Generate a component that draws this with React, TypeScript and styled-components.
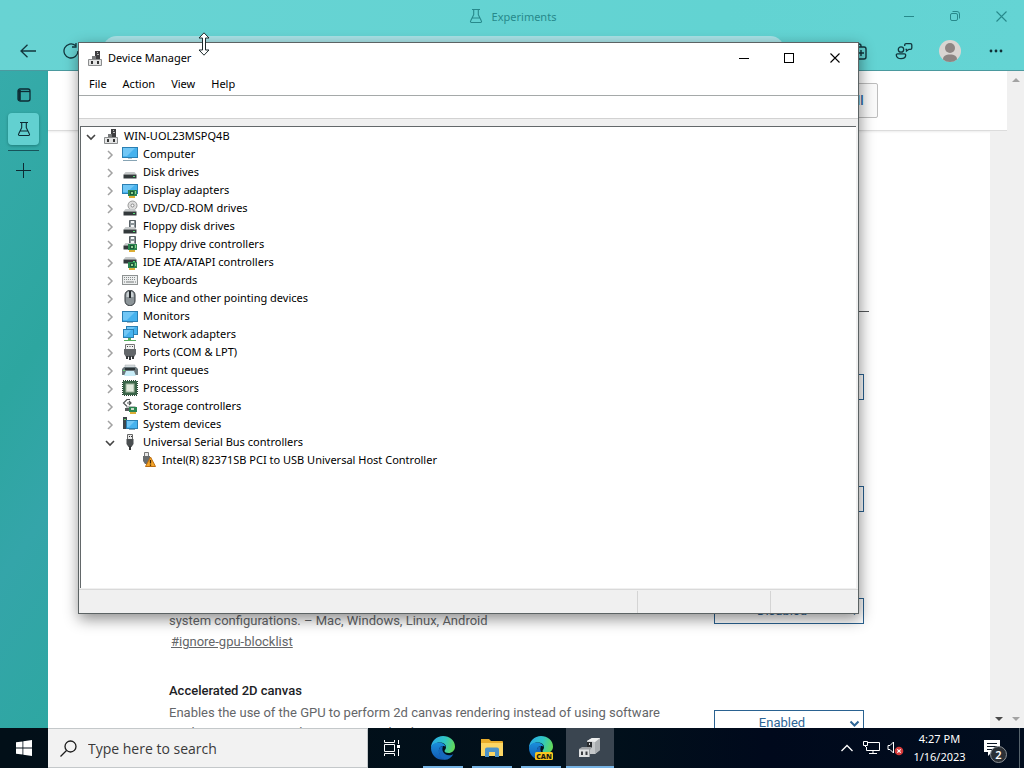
import React from "react";
import styled, { createGlobalStyle, css } from "styled-components";

const ui = `"Noto Sans", "Open Sans", sans-serif`;

const Global = createGlobalStyle`
  * { box-sizing: border-box; }
  body { margin: 0; font-family: ${ui}; font-size: 11px; overflow: hidden; }
  button, input, select { font: inherit; color: inherit; border: 0; background: none; padding: 0; margin: 0; border-radius: 0; }
  svg { display: block; flex: none; }
`;

const Desktop = styled.div`
  position: relative;
  height: 100vh;
  display: flex;
  flex-direction: column;
  overflow: hidden;
`;

/* ---------- Browser ---------- */

const Browser = styled.div`
  flex: 1;
  min-height: 0;
  display: flex;
  flex-direction: column;
`;

const BrowserTop = styled.header`
  background: linear-gradient(100deg, #68d3d3, #62d3d2 70%, #64d4d4);
  border-bottom: 1px solid #4c9a9f;
`;

const TitleRow = styled.div`
  position: relative;
  height: 32px;
  display: flex;
  justify-content: center;
  align-items: center;
  color: #27898b;
`;

const PageTitle = styled.div`
  display: flex;
  align-items: center;
  gap: 8px;
`;

const TitleButtons = styled.div`
  position: absolute;
  right: 0;
  top: 0;
  display: flex;
`;

const IconButton = styled.button<{ $w: number; $h: number }>`
  width: ${(p) => p.$w}px;
  height: ${(p) => p.$h}px;
  display: flex;
  flex: none;
  align-items: center;
  justify-content: center;
`;

const ToolRow = styled.div`
  height: 38px;
  display: flex;
  align-items: center;
  padding: 0 5px 0 6px;
  color: #12363d;
`;

const Address = styled.input`
  flex: 1;
  min-width: 0;
  height: 30px;
  margin: 0 50px 0 10px;
  border-radius: 15px;
  background: #a9e2e6;
`;

const BrowserBody = styled.div`
  flex: 1;
  min-height: 0;
  display: flex;
`;

const SideTabs = styled.nav`
  width: 48px;
  flex: none;
  padding: 8px 9px 8px 8px;
  display: flex;
  flex-direction: column;
  gap: 2px;
  color: #0d2b33;
  background: linear-gradient(125deg, #36abaa, #2da6a0 45%, #34a5a9 70%, #2ea7a2);
`;

const SideTab = styled.button<{ $active?: boolean }>`
  height: 32px;
  display: flex;
  align-items: center;
  justify-content: center;
  border-radius: 4px;
  ${(p) =>
    p.$active &&
    css`
      background: #62d0d0;
      box-shadow: 0 1px 3px rgba(0, 60, 60, 0.4);
    `}
`;

const SideRule = styled.div`
  height: 1px;
  margin: 3px 0 1px;
  background: #17545a;
`;

const PageArea = styled.div`
  flex: 1;
  min-width: 0;
  display: flex;
  flex-direction: column;
  background: #fff;
`;

const FlagsHeader = styled.div`
  height: 60px;
  flex: none;
  display: flex;
  justify-content: center;
  align-items: center;
  border-bottom: 1px solid #dcdcdc;
  box-shadow: 0 1px 2px rgba(0, 0, 0, 0.08);
  font-family: Roboto, sans-serif;
  font-size: 13px;
`;

const HeaderInner = styled.div`
  width: 700px;
  display: flex;
  justify-content: flex-end;
`;

const ResetButton = styled.button`
  height: 35px;
  padding: 0 13px;
  border: 1px solid #bdbdbd;
  border-radius: 2px;
  background: #fafafa;
  color: #2667a6;
  font-weight: 500;
`;

const Scroller = styled.div`
  flex: 1;
  min-height: 0;
  display: flex;
`;

const ScrollBar = styled.div`
  width: 17px;
  flex: none;
  background: #f0f0f0;
  display: flex;
  flex-direction: column;
  justify-content: space-between;
  align-items: center;
  padding: 5px 0;
`;

const Flags = styled.main`
  flex: 1;
  min-width: 0;
  overflow: hidden;
  font-family: Roboto, sans-serif;
  font-size: 13px;
  line-height: 20px;
  color: #646669;
`;

const FlagsColumn = styled.div`
  max-width: 700px;
  margin: 0 auto;
`;

const FlagsIntro = styled.div`
  height: 181px;
  border-bottom: 1px solid #55585b;
  margin-bottom: 33px;
`;

const FlagRow = styled.section`
  height: 112px;
  display: grid;
  grid-template-columns: 1fr 150px;
  padding-right: 5px;
  align-items: start;
`;

const FlagName = styled.h3`
  margin: 0 0 2px;
  font-size: 13px;
  font-weight: 500;
  color: #202124;
`;

const FlagText = styled.p`
  margin: 0;
`;

const FlagLink = styled.a`
  display: inline-block;
  padding-left: 2px;
  margin-top: 1px;
  color: inherit;
  text-decoration: underline;
`;

const SelectBox = styled.div`
  position: relative;
  margin-top: 29px;
  svg {
    position: absolute;
    right: 4px;
    top: 10px;
    pointer-events: none;
  }
`;

const FlagSelect = styled.select`
  display: block;
  width: 100%;
  height: 26px;
  appearance: none;
  border: 1px solid #2a6291;
  background: #fff;
  color: #2d6596;
  padding-right: 14px;
  text-align: center;
  text-align-last: center;
`;

/* ---------- Device Manager ---------- */

const Window = styled.section`
  position: absolute;
  left: 78px;
  top: 42px;
  width: 781px;
  height: 572px;
  display: flex;
  flex-direction: column;
  background: #fff;
  border: 1px solid #5c6364;
  box-shadow: 1px 5px 14px rgba(0, 0, 0, 0.45);
  color: #000;
`;

const WindowTitle = styled.div`
  height: 29px;
  display: flex;
  align-items: center;
  padding-left: 8px;
  gap: 5px;
`;

const Caption = styled.span`
  flex: 1;
`;

const WindowControls = styled.div`
  display: flex;
`;

const MenuBar = styled.div`
  height: 23px;
  display: flex;
  padding-left: 2px;
`;

const MenuItem = styled.button`
  padding: 0 8px;
`;

const ToolStrip = styled.div`
  height: 24px;
  border-top: 1px solid #a5a9a9;
  border-bottom: 1px solid #d2d2d2;
`;

const TreeFrame = styled.div`
  flex: 1;
  min-height: 0;
  display: flex;
  padding: 7px 2px 1px 1px;
  background: #f0f0f0;
`;

const Tree = styled.ul`
  flex: 1;
  margin: 0;
  padding: 0 0 0 1px;
  list-style: none;
  background: #fff;
  border-top: 1px solid #63686a;
  border-left: 1px solid #63686a;
`;

const TreeRow = styled.li<{ $level: number }>`
  height: 18px;
  display: flex;
  align-items: center;
  padding-left: ${(p) => p.$level * 19}px;
`;

const Expander = styled.button`
  width: 17px;
  height: 18px;
  margin-right: 4px;
  padding-top: 2px;
  display: flex;
  align-items: center;
  justify-content: center;
`;

const ExpanderGap = styled.span`
  width: 21px;
`;

const RowLabel = styled.span`
  margin-left: 5px;
  line-height: 18px;
  white-space: nowrap;
`;

const StatusBar = styled.div`
  height: 24px;
  display: flex;
  justify-content: flex-end;
  background: #f0f0f0;
  border-top: 1px solid #d9d9d9;
`;

const StatusCell = styled.div<{ $w: number }>`
  width: ${(p) => p.$w}px;
  margin-top: 1px;
  border-left: 1px solid #d4d4d4;
`;

const ResizePointer = styled.svg`
  position: absolute;
  left: 198px;
  top: 32px;
`;

/* ---------- Taskbar ---------- */

const Taskbar = styled.footer`
  height: 40px;
  flex: none;
  display: flex;
  background: linear-gradient(90deg, #020f18, #01101b 60%, #00091c 75%, #010d1e);
  color: #fff;
`;

const SearchBox = styled.label`
  width: 320px;
  display: flex;
  align-items: center;
  gap: 11px;
  padding-left: 12px;
  background: #f2f2f2;
  border: 1px solid #c4c8ca;
  border-left-width: 0;
  color: #1c1c1c;
`;

const SearchInput = styled.input`
  flex: 1;
  min-width: 0;
  font-family: "Open Sans", "Noto Sans", sans-serif;
  font-size: 14px;
  outline: 0;
  &::placeholder {
    color: #3a3a3a;
    opacity: 1;
  }
`;

const TaskButtons = styled.div`
  flex: 1;
  display: flex;
  gap: 1px;
`;

const TaskButton = styled.button<{ $state?: "open" | "active" }>`
  position: relative;
  width: 48px;
  height: 40px;
  display: flex;
  align-items: center;
  justify-content: center;
  ${(p) => p.$state === "active" && "background: #3a4550;"}
  &::after {
    content: "";
    position: absolute;
    bottom: 0;
    height: 2px;
    left: ${(p) => (p.$state === "active" ? 0 : 4)}px;
    right: ${(p) => (p.$state === "active" ? 0 : 4)}px;
    ${(p) => p.$state && "background: #76b3e4;"}
  }
`;

const TaskView = styled(TaskButton)`
  margin-right: 2px;
`;

const Tray = styled.div`
  display: flex;
  align-items: center;
`;

const Clock = styled.button`
  width: 65px;
  line-height: 18px;
  text-align: center;
  color: #fff;
`;

const ActionCenter = styled.button`
  position: relative;
  width: 47px;
  height: 40px;
  padding-right: 8px;
  display: flex;
  align-items: center;
  justify-content: center;
`;

const Badge = styled.span`
  position: absolute;
  left: 18px;
  top: 18px;
  width: 17px;
  height: 17px;
  border-radius: 50%;
  border: 1px solid #8c9196;
  background: #2b3036;
  font-weight: 600;
  line-height: 15px;
`;

const ShowDesktop = styled.button`
  width: 5px;
  height: 40px;
  border-left: 1px solid #56636c;
`;

/* ---------- Drawings ---------- */

const Flask = ({ size = 16 }: { size?: number }) => (
  <svg width={size} height={size} viewBox="0 0 16 16" fill="none" stroke="currentColor" strokeWidth="1.1">
    <path d="M4 1.5h8M5.7 1.5v5.2L2.6 13a1 1 0 0 0 .9 1.5h9a1 1 0 0 0 .9-1.5l-3.1-6.3V1.5M4.3 10h7.4" />
  </svg>
);

const Minus = ({ size }: { size: number }) => (
  <svg width={size} height={size} stroke="currentColor">
    <path d={`M0 ${Math.floor(size / 2) + 0.5}H${size}`} />
  </svg>
);

const Cross = ({ size }: { size: number }) => (
  <svg width={size} height={size} stroke="currentColor" strokeWidth="1.1">
    <path d={`M.5 .5L${size - 0.5} ${size - 0.5}M${size - 0.5} .5L.5 ${size - 0.5}`} />
  </svg>
);

const Chevron = ({ open }: { open?: boolean }) =>
  open ? (
    <svg width="10" height="10" fill="none" stroke="#444" strokeWidth="1.6">
      <path d="M1 3l4 4 4-4" />
    </svg>
  ) : (
    <svg width="10" height="10" fill="none" stroke="#a2a2a2" strokeWidth="1.5">
      <path d="M3 1l4 4-4 4" />
    </svg>
  );

const Triangle = ({ up, color }: { up?: boolean; color: string }) => (
  <svg width="8" height="8" fill={color}>
    <path d={up ? "M0 6l4-4 4 4z" : "M0 2h8L4 6z"} />
  </svg>
);

const Disk = ({ y = 9 }: { y?: number }) => (
  <g>
    <path d={`M3.5 ${y}h9l2 2.5h-13z`} fill="#c6c9ca" />
    <path d={`M1.5 ${y + 2.5}h13v4h-13z`} fill="#33393b" />
    <path d={`M11 ${y + 4}h2v1h-2z`} fill="#58dc78" />
  </g>
);

const Screen = ({ x, y, w, h }: { x: number; y: number; w: number; h: number }) => (
  <g>
    <rect x={x + 0.5} y={y + 0.5} width={w - 1} height={h - 1} fill="#46b2ee" stroke="#2a7fb3" />
    <path d={`M${x + 1} ${y + 1}h${w - 4}l-${w / 2} ${h - 3}h-${w / 2 - 4}z`} fill="#83d0fa" opacity=".7" />
  </g>
);

const Board = () => (
  <g>
    <path d="M6 8h9v6H6z" fill="#2b8550" />
    <path d="M8 9h4v4H8z" fill="#1b5738" />
    <path d="M9 10h2v2H9zM13 9h1v3h-1z" fill="#8ed28f" />
    <path d="M7 14h6v2H7z" fill="#dcae36" />
  </g>
);

const drawings: Record<string, React.ReactNode> = {
  root: (
    <>
      <path d="M8 1h5v8H8z" fill="#3e3e40" />
      <path d="M10 2h1v1h-1zM10 4h2v1h-2z" fill="#bababa" />
      <path d="M5 6h4v3H5z" fill="#77797a" />
      <path d="M1.500 9.500h13v6h-13z" fill="#e3e4e4" stroke="#8b8d8e" />
      <path d="M4 11h2v3H4zM10 11h2v3h-2z" fill="#333" />
    </>
  ),
  computer: (
    <>
      <Screen x={0} y={1} w={16} h={11} />
      <path d="M6 12h4v1H6z" fill="#b5c5cd" />
      <path d="M1 14h14v1H1z" fill="#87a4b4" />
    </>
  ),
  disk: <Disk y={8} />,
  display: (
    <>
      <Screen x={0} y={2} w={16} h={10} />
      <Board />
    </>
  ),
  dvd: (
    <>
      <circle cx="10.500" cy="5.500" r="4.500" fill="#dedede" stroke="#989898" />
      <circle cx="10.500" cy="5.500" r="1.500" fill="#fff" stroke="#888" />
      <Disk />
    </>
  ),
  floppy: (
    <>
      <path d="M7.500 2.500h6v7h-6z" fill="#8b9498" stroke="#596166" />
      <path d="M9 3h3v2H9zM9 7h3v2H9z" fill="#f2f5f6" />
      <Disk />
    </>
  ),
  floppyctl: (
    <>
      <path d="M7.500 .5h6v7h-6z" fill="#8b9498" stroke="#596166" />
      <path d="M9 1h3v2H9zM9 5h3v2H9z" fill="#f2f5f6" />
      <Disk y={7} />
      <Board />
    </>
  ),
  ide: (
    <>
      <Disk y={3} />
      <Board />
    </>
  ),
  keyboard: (
    <>
      <rect x=".5" y="3.500" width="15" height="9" fill="#eceeee" stroke="#8e9292" />
      <path d="M2 5.500h12M2 7.500h12" stroke="#888c8c" strokeDasharray="1 1" />
      <path d="M2 10h1M4 10h8M13 10h1" stroke="#777b7b" />
    </>
  ),
  mouse: (
    <>
      <rect x="3" y=".5" width="10" height="15" rx="4.500" fill="#8c9498" stroke="#30363a" />
      <path d="M4.500 7V4.500A3 3 0 0 1 7 1.500V7zM9 1.500a3 3 0 0 1 2.500 3V7H9z" fill="#c9d0d3" />
      <path d="M8 1v7" stroke="#22282b" strokeWidth="2" />
    </>
  ),
  monitor: (
    <>
      <Screen x={0} y={3} w={16} h={11} />
      <path d="M5 14h6v1H5z" fill="#9eb8c6" />
    </>
  ),
  network: (
    <>
      <Screen x={4} y={0} w={12} h={9} />
      <Screen x={1} y={3} w={11} h={9} />
      <path d="M6 12h3v2H6zM2 14h12v1H2z" fill="#54ad5d" />
    </>
  ),
  ports: (
    <>
      <path d="M3.500 .5h9v5h-9z" fill="#f1f1f1" stroke="#777" />
      <path d="M5 2h1v1H5zM7.500 2h1v1h-1zM10 2h1v1h-1z" fill="#444" />
      <path d="M2 5h12v5l-2 3H4l-2-3z" fill="#63676a" />
      <path d="M4 12h2v3H4zM7 12h2v4H7zM10 12h2v3h-2z" fill="#35383a" />
    </>
  ),
  printer: (
    <>
      <path d="M3 3h10v3H3z" fill="#d4dbde" stroke="#a4abae" strokeWidth=".5" />
      <path d="M0 7l2-2h12l2 2v6H0z" fill="#6a777c" />
      <path d="M3 6h10v2H3z" fill="#2c3437" />
      <path d="M4 9h8l2 5H2z" fill="#c9edf8" />
      <path d="M1 8h2v1H1z" fill="#61d76f" />
    </>
  ),
  cpu: (
    <>
      <rect x="1" y="1" width="14" height="14" fill="none" stroke="#2b4635" strokeWidth="2" strokeDasharray="1 1" />
      <rect x="1" y="1" width="14" height="14" fill="#3a6448" />
      <rect x="4" y="4" width="8" height="8" fill="#e1eadd" stroke="#9eb39c" />
    </>
  ),
  storage: (
    <>
      <path d="M8 1.500H5L1.500 5 5 8.500h3M9 5H5M7 3l2 2-2 2" fill="none" stroke="#4b4f50" strokeWidth="1.200" />
      <path d="M5 8h8l2 2H4z" fill="#b6babb" />
      <path d="M3 10h8v3H3z" fill="#585c5d" />
      <path d="M7 9h8v5H7z" fill="#2b8550" />
      <path d="M9 10h3v2H9z" fill="#c8ddc8" />
      <path d="M8 14h6v2H8z" fill="#dcae36" />
    </>
  ),
  system: (
    <>
      <path d="M1 1h4v12H1z" fill="#3d464b" />
      <path d="M2 3h2v1H2z" fill="#5ed36a" />
      <Screen x={4} y={4} w={12} h={9} />
      <path d="M7 13h6v1H7z" fill="#8ba8b7" />
    </>
  ),
  usb: (
    <>
      <path d="M5.500 .5h5v5h-5z" fill="#e9e9e9" stroke="#666" />
      <path d="M7 2h1v1H7zM9 2h1v1H9z" fill="#333" />
      <path d="M4.500 5h7v5l-2 3h-3l-2-3z" fill="#4b4f51" />
      <path d="M7 12h2v4H7z" fill="#37393a" />
    </>
  ),
  usbwarn: (
    <>
      <path d="M3.500 .5h4v4h-4z" fill="#e9e9e9" stroke="#777" />
      <path d="M2 4h7v5l-2 3H4L2 9z" fill="#696d6e" />
      <path d="M9.500 5l5 9.500h-10z" fill="#f6a62a" stroke="#bb6d10" />
      <path d="M9.500 8v3.500M9.500 12.500v1.200" stroke="#3b2205" strokeWidth="1.300" />
    </>
  ),
};

const DeviceIcon = ({ name }: { name: string }) => (
  <svg width="16" height="16" viewBox="0 0 16 16">
    {drawings[name]}
  </svg>
);

const EdgeLogo = ({ canary, id }: { canary?: boolean; id: string }) => (
  <svg width="26" height="26" viewBox="0 0 26 26">
    <defs>
      <linearGradient id={`${id}a`} x1="0" y1=".3" x2="1" y2=".5">
        <stop offset="0" stopColor="#2aa9e6" />
        <stop offset=".55" stopColor="#2fc6c4" />
        <stop offset="1" stopColor="#63d957" />
      </linearGradient>
      <linearGradient id={`${id}b`} x1="0" y1="0" x2="0" y2="1">
        <stop offset="0" stopColor="#1a8fdc" />
        <stop offset="1" stopColor="#1259b0" />
      </linearGradient>
    </defs>
    <path d="M1 13C1 6 6.500 1 13 1s12 4.500 12 10.500c0 4-3 6.500-6.500 6.500-2.500 0-4-1-4-2s1.500-1.500 1.500-4S13.500 7.500 9.500 7.500 2 10 1 13z" fill={`url(#${id}a)`} />
    <path d="M1 13c.5-3.500 4-5.500 8-5.500 4.500 0 6.500 2.500 6.500 4.500-1-1.500-5.500-1.500-6.500 2.500-.8 4 2.500 8 6.500 10C8 26 1 21 1 13z" fill={`url(#${id}b)`} />
    <path d="M9 14.500C9.500 12 11 11 13 11.300c-1.800 3.500.5 9 6 9 2 0 3.500-.6 4.300-1-1.800 3.500-5 5.500-8.300 5.500-4-1.500-7-6-6-10.300z" fill="#1668bd" />
    {canary && (
      <>
        <rect x="7" y="17" width="18" height="8" rx="1.500" fill="#f9c71f" />
        <text x="16" y="24" textAnchor="middle" fontFamily="Open Sans" fontSize="7" fontWeight="800" fill="#1c1a10">
          CAN
        </text>
      </>
    )}
  </svg>
);

/* ---------- Data ---------- */

type Device = { icon: string; label: string; level: number; open?: boolean; leaf?: boolean };

const devices: Device[] = [
  { icon: "root", label: "WIN-UOL23MSPQ4B", level: 0, open: true },
  { icon: "computer", label: "Computer", level: 1 },
  { icon: "disk", label: "Disk drives", level: 1 },
  { icon: "display", label: "Display adapters", level: 1 },
  { icon: "dvd", label: "DVD/CD-ROM drives", level: 1 },
  { icon: "floppy", label: "Floppy disk drives", level: 1 },
  { icon: "floppyctl", label: "Floppy drive controllers", level: 1 },
  { icon: "ide", label: "IDE ATA/ATAPI controllers", level: 1 },
  { icon: "keyboard", label: "Keyboards", level: 1 },
  { icon: "mouse", label: "Mice and other pointing devices", level: 1 },
  { icon: "monitor", label: "Monitors", level: 1 },
  { icon: "network", label: "Network adapters", level: 1 },
  { icon: "ports", label: "Ports (COM & LPT)", level: 1 },
  { icon: "printer", label: "Print queues", level: 1 },
  { icon: "cpu", label: "Processors", level: 1 },
  { icon: "storage", label: "Storage controllers", level: 1 },
  { icon: "system", label: "System devices", level: 1 },
  { icon: "usb", label: "Universal Serial Bus controllers", level: 1, open: true },
  { icon: "usbwarn", label: "Intel(R) 82371SB PCI to USB Universal Host Controller", level: 2, leaf: true },
];

type Flag = { id: string; name?: string; text?: string; link?: string; value: string };

const flags: Flag[] = [
  { id: "flag-1", value: "Default" },
  { id: "flag-2", value: "Default" },
  {
    id: "flag-3",
    name: "Override software rendering list",
    text: "Overrides the built-in software rendering list and enables GPU-acceleration on unsupported system configurations. – Mac, Windows, Linux, Android",
    link: "#ignore-gpu-blocklist",
    value: "Disabled",
  },
  {
    id: "flag-4",
    name: "Accelerated 2D canvas",
    text: "Enables the use of the GPU to perform 2d canvas rendering instead of using software rendering. – Mac, Windows, Linux, Android",
    value: "Enabled",
  },
];

export default function App() {
  return (
    <Desktop>
      <Global />
      <Browser>
        <BrowserTop>
          <TitleRow>
            <PageTitle>
              <Flask />
              <span>Experiments</span>
            </PageTitle>
            <TitleButtons>
              <IconButton $w={46} $h={32} aria-label="Minimize browser"><Minus size={10} /></IconButton>
              <IconButton $w={46} $h={32} aria-label="Restore browser">
                <svg width="10" height="10" fill="none" stroke="currentColor">
                  <rect x=".5" y="2.500" width="7" height="7" rx="1.500" />
                  <path d="M2.500.5H7A2.500 2.500 0 0 1 9.500 3v4.500" />
                </svg>
              </IconButton>
              <IconButton $w={46} $h={32} aria-label="Close browser"><Cross size={11} /></IconButton>
            </TitleButtons>
          </TitleRow>
          <ToolRow>
            <IconButton $w={44} $h={30} aria-label="Back">
              <svg width="16" height="14" fill="none" stroke="currentColor" strokeWidth="1.300">
                <path d="M16 7H1M7.500 .8L1 7l6.500 6.200" />
              </svg>
            </IconButton>
            <IconButton $w={42} $h={30} aria-label="Refresh">
              <svg width="16" height="16" fill="none" stroke="currentColor" strokeWidth="1.300">
                <path d="M15 8A7 7 0 1 1 12.500 2.600M13 0v4H9" />
              </svg>
            </IconButton>
            <Address aria-label="Address" />
            <IconButton $w={46} $h={30} aria-label="Collections">
              <svg width="18" height="18" fill="none" stroke="currentColor" strokeWidth="1.400">
                <rect x="5" y="5" width="12" height="12" rx="2" />
                <path d="M2 12V4a2 2 0 0 1 2-2h6a2 2 0 0 1 2 2v1M12 8v6M9 11h6" />
              </svg>
            </IconButton>
            <IconButton $w={46} $h={30} aria-label="Feedback">
              <svg width="18" height="18" fill="none" stroke="currentColor" strokeWidth="1.300">
                <circle cx="6" cy="7.500" r="2.700" />
                <path d="M2.500 11.800h7a1.200 1.200 0 0 1 1.200 1.200c0 2.300-2 3.700-4.700 3.700S1.300 15.300 1.300 13a1.200 1.200 0 0 1 1.200-1.200zM9.700 4V3A1.300 1.300 0 0 1 11 1.700h4.500a1.300 1.300 0 0 1 1.300 1.300v3a1.300 1.300 0 0 1-1.300 1.300H14l-2.500 1.700V7.300H10.500" />
              </svg>
            </IconButton>
            <IconButton $w={46} $h={30} aria-label="Profile">
              <svg width="22" height="22">
                <circle cx="11" cy="11" r="11" fill="#d9d5d2" />
                <circle cx="11" cy="8" r="5" fill="#8d8583" />
                <path d="M4 19.400c0-3.500 2.500-5 7-5s7 1.500 7 5A11 11 0 0 1 4 19.400z" fill="#8d8583" />
              </svg>
            </IconButton>
            <IconButton $w={46} $h={30} aria-label="Settings and more">
              <svg width="14" height="4" fill="#102f36">
                <circle cx="2" cy="2" r="1.400" />
                <circle cx="7" cy="2" r="1.400" />
                <circle cx="12" cy="2" r="1.400" />
              </svg>
            </IconButton>
          </ToolRow>
        </BrowserTop>
        <BrowserBody>
          <SideTabs>
            <SideTab aria-label="Tab actions">
              <svg width="14" height="14" fill="none" stroke="currentColor" strokeWidth="1.300">
                <rect x="1" y="1" width="12" height="12" rx="2" />
                <path d="M1 3.500h12" />
                <path d="M2.500 2v10.500" strokeWidth="2.600" />
              </svg>
            </SideTab>
            <SideTab $active aria-label="Experiments tab"><Flask /></SideTab>
            <SideRule />
            <SideTab aria-label="New tab">
              <svg width="15" height="15" stroke="currentColor">
                <path d="M0 7.500h15M7.500 0v15" />
              </svg>
            </SideTab>
          </SideTabs>
          <PageArea>
            <FlagsHeader>
              <HeaderInner>
                <ResetButton>Reset all</ResetButton>
              </HeaderInner>
            </FlagsHeader>
            <Scroller>
              <Flags>
                <FlagsColumn>
                  <FlagsIntro />
                  {flags.map((f) => (
                    <FlagRow key={f.id}>
                      <div>
                        {f.name && <FlagName>{f.name}</FlagName>}
                        {f.text && <FlagText>{f.text}</FlagText>}
                        {f.link && <FlagLink href={f.link}>{f.link}</FlagLink>}
                      </div>
                      <SelectBox>
                        <FlagSelect aria-label={f.name ?? "Experiment state"} defaultValue={f.value}>
                          <option>{f.value}</option>
                        </FlagSelect>
                        <svg width="11" height="8" fill="none" stroke="#2d6596" strokeWidth="2">
                          <path d="M1.500 1.500l4 4 4-4" />
                        </svg>
                      </SelectBox>
                    </FlagRow>
                  ))}
                </FlagsColumn>
              </Flags>
              <ScrollBar>
                <span />
                <Triangle color="#4a4a4a" />
              </ScrollBar>
            </Scroller>
          </PageArea>
          <ScrollBar>
            <Triangle up color="#a3a3a3" />
            <Triangle color="#a3a3a3" />
          </ScrollBar>
        </BrowserBody>
      </Browser>

      <Taskbar>
        <IconButton $w={48} $h={40} aria-label="Start">
          <svg width="16" height="16" fill="#fff">
            <path d="M0 2.300l6.500-.9v6.200H0zM7.300 1.300L16 0v7.600H7.300zM0 8.400h6.500v6.200L0 13.700zM7.300 8.400H16V16l-8.700-1.300z" />
          </svg>
        </IconButton>
        <SearchBox>
          <svg width="17" height="17" fill="none" stroke="currentColor" strokeWidth="1.300">
            <circle cx="10.500" cy="6.500" r="5.500" />
            <path d="M6.500 10.500L.5 16.500" />
          </svg>
          <SearchInput placeholder="Type here to search" />
        </SearchBox>
        <TaskButtons>
          <TaskView aria-label="Task view">
            <svg width="17" height="16" fill="none" stroke="#fff">
              <path d="M.5 0v2.500h10V0M.5 16v-2.500h10V16M.5 4.500h10v7H.5zM14.500 0v4M14.500 9v7" />
              <path d="M13 5h3v3h-3z" fill="#fff" stroke="none" />
            </svg>
          </TaskView>
          <TaskButton $state="open" aria-label="Microsoft Edge"><EdgeLogo id="edge" /></TaskButton>
          <TaskButton $state="open" aria-label="File Explorer">
            <svg width="22" height="20">
              <path d="M0 1h8l2 2h11a1 1 0 0 1 1 1v14H0z" fill="#e9ad2b" />
              <path d="M0 5h22v13H0z" fill="#fcd664" />
              <path d="M4 19v-7.500a2 2 0 0 1 2-2h10a2 2 0 0 1 2 2V19h-4v-5H8v5z" fill="#4d93c8" />
            </svg>
          </TaskButton>
          <TaskButton $state="open" aria-label="Microsoft Edge Canary"><EdgeLogo id="canary" canary /></TaskButton>
          <TaskButton $state="active" aria-label="Device Manager">
            <svg width="24" height="22">
              <path d="M9 4l5-3h8v12l-5 4h-8z" fill="#c4c7c9" />
              <path d="M17 5l5-4v12l-5 4z" fill="#a9adb0" />
              <path d="M9 4l5-3h8l-5 4z" fill="#eceeee" />
              <path d="M9 5h5v6H9z" fill="#2a2d30" />
              <path d="M11 6h1v2h-1z" fill="#d3d5d6" />
              <path d="M1 12l3-2h10l-2 3v7H1z" fill="#9da1a4" />
              <path d="M1 12.500h10V20H1z" fill="#dfe1e2" />
              <path d="M3 14.500h2V18H3zM7.500 14.500h2V18h-2z" fill="#3a3d40" />
            </svg>
          </TaskButton>
        </TaskButtons>
        <Tray>
          <IconButton $w={24} $h={40} aria-label="Show hidden icons">
            <svg width="12" height="8" fill="none" stroke="#fff" strokeWidth="1.300">
              <path d="M.5 7L6 1.500 11.500 7" />
            </svg>
          </IconButton>
          <IconButton $w={24} $h={40} aria-label="Network">
            <svg width="17" height="14" fill="none" stroke="#fff">
              <path d="M5 1.500h11.500v8H3.500V6M10 9.500v3M6 12.500h8" />
              <path d="M.5 .5h4v4h-4zM2.500 4.500V6" />
            </svg>
          </IconButton>
          <IconButton $w={24} $h={40} aria-label="Volume muted">
            <svg width="17" height="15" fill="none" stroke="#fff">
              <path d="M1 4.500h2L6.500 1v11L3 8.500H1z" />
              <circle cx="12" cy="10" r="4.300" fill="#d63a3a" stroke="none" />
              <path d="M10.300 8.300l3.400 3.400M13.700 8.300l-3.400 3.400" strokeWidth="1.200" />
            </svg>
          </IconButton>
          <Clock>4:27 PM<br />1/16/2023</Clock>
          <ActionCenter aria-label="Notifications">
            <svg width="18" height="18">
              <path d="M1 1h16v12H9l-4 4v-4H1z" fill="#fff" />
              <path d="M4 4.500h10M4 7.500h10M4 10.500h7" stroke="#0a1523" />
            </svg>
            <Badge>2</Badge>
          </ActionCenter>
          <ShowDesktop aria-label="Show desktop" />
        </Tray>
      </Taskbar>

      <Window aria-label="Device Manager">
        <WindowTitle>
          <DeviceIcon name="root" />
          <Caption>Device Manager</Caption>
          <WindowControls>
            <IconButton $w={45} $h={28} aria-label="Minimize"><Minus size={10} /></IconButton>
            <IconButton $w={46} $h={28} aria-label="Maximize">
              <svg width="10" height="10" fill="none" stroke="currentColor">
                <rect x=".5" y=".5" width="9" height="9" />
              </svg>
            </IconButton>
            <IconButton $w={46} $h={28} aria-label="Close"><Cross size={10} /></IconButton>
          </WindowControls>
        </WindowTitle>
        <MenuBar>
          {["File", "Action", "View", "Help"].map((m) => (
            <MenuItem key={m}>{m}</MenuItem>
          ))}
        </MenuBar>
        <ToolStrip />
        <TreeFrame>
          <Tree>
            {devices.map((d) => (
              <TreeRow key={d.label} $level={d.level}>
                {d.leaf ? (
                  <ExpanderGap />
                ) : (
                  <Expander aria-label={`Toggle ${d.label}`} aria-expanded={!!d.open}>
                    <Chevron open={d.open} />
                  </Expander>
                )}
                <DeviceIcon name={d.icon} />
                <RowLabel>{d.label}</RowLabel>
              </TreeRow>
            ))}
          </Tree>
        </TreeFrame>
        <StatusBar>
          <StatusCell $w={133} />
          <StatusCell $w={88} />
        </StatusBar>
      </Window>

      <ResizePointer width="12" height="24" aria-hidden="true">
        <path d="M6 .8l5 5.200H7.500v12H11l-5 5.200L1 18h3.500V6H1z" fill="#fff" stroke="#1d2a2c" />
      </ResizePointer>
    </Desktop>
  );
}
